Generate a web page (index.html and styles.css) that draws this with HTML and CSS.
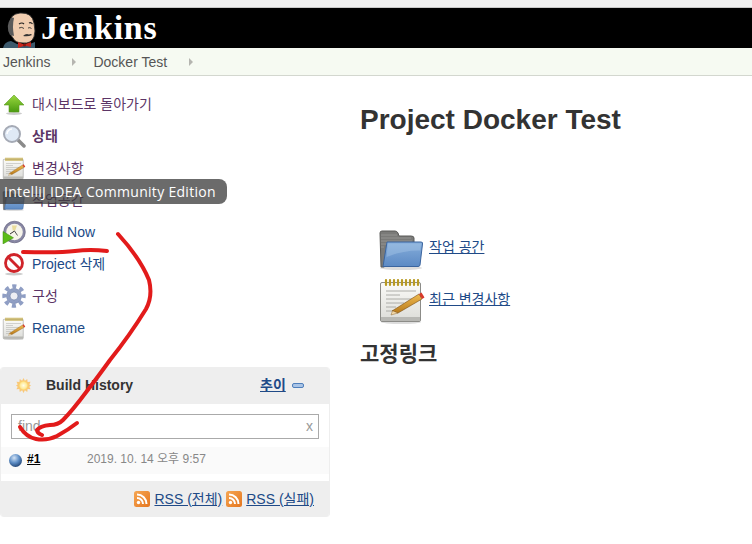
FILE: index.html
```html
<!DOCTYPE html>
<html lang="ko">
<head>
<meta charset="utf-8">
<title>Project Docker Test</title>
<link rel="stylesheet" href="styles.css">
</head>
<body>
<svg class="defs" width="0" height="0" aria-hidden="true">
  <defs>
    <linearGradient id="paper" x1="0" y1="0" x2="0" y2="1"><stop offset="0" stop-color="#fbfbf8"/><stop offset="1" stop-color="#dcdcd8"/></linearGradient>
    <linearGradient id="green" x1="0" y1="0" x2="0" y2="1"><stop offset="0" stop-color="#9ad83f"/><stop offset="1" stop-color="#4a9a10"/></linearGradient>
    <linearGradient id="blue" x1="0" y1="0" x2="0" y2="1"><stop offset="0" stop-color="#86aedb"/><stop offset="1" stop-color="#5c8ac4"/></linearGradient>
    <linearGradient id="pencil" x1="0" y1="1" x2="0" y2="0"><stop offset="0" stop-color="#b87a1c"/><stop offset="1" stop-color="#f0bb50"/></linearGradient>
    <linearGradient id="rss" x1="0" y1="0" x2="1" y2="1"><stop offset="0" stop-color="#f5a653"/><stop offset="1" stop-color="#e5761f"/></linearGradient>
    <radialGradient id="ball" cx=".4" cy=".3" r=".75"><stop offset="0" stop-color="#d3e3f5"/><stop offset=".5" stop-color="#5f8fc7"/><stop offset="1" stop-color="#1c3f70"/></radialGradient>
    <radialGradient id="sun" cx=".5" cy=".5" r=".5"><stop offset="0" stop-color="#fffde6"/><stop offset=".7" stop-color="#ffeb9c"/><stop offset="1" stop-color="#fbd468"/></radialGradient>
    <symbol id="i-notepad" viewBox="0 0 48 48">
      <ellipse cx="23" cy="46" rx="20" ry="2" fill="#ddd"/>
      <rect x="2.500" y="6.500" width="40" height="39" rx="1.500" fill="url(#paper)" stroke="#8c8c88"/>
      <rect x="3" y="41" width="39" height="4" fill="#b8b8b4"/>
      <path d="M8 4v5M12 4v5M16 4v5M20 4v5M24 4v5M28 4v5M32 4v5M36 4v5M40 4v5" stroke="#b89a20" stroke-width="2.200" stroke-linecap="round"/>
      <path d="M8 15h30M8 19h14M8 23h26M8 27h18M8 31h10M8 35h8" stroke="#a5a5a0" stroke-width=".9"/>
      <path d="M14 35 41 18l3 5-24 14z" fill="url(#pencil)" stroke="#7a4d10" stroke-width=".6"/>
      <path d="M41 18l3 5 2.500-1.500-3-5z" fill="#d83a2a"/>
      <path d="M14.500 34.700 20 37l-7 2z" fill="#f2d8a8" stroke="#7a4d10" stroke-width=".4"/>
    </symbol>
    <symbol id="i-folder" viewBox="0 0 48 48">
      <ellipse cx="23" cy="44" rx="21" ry="2" fill="#ddd"/>
      <path d="M2 9q0-2 2-2h13q2 0 3 2l1 3h12q3 0 3 2v6L6 43H3z" fill="#7a7a78" stroke="#5a5a58"/>
      <path d="M3 11h16M3 14h30M3 17h31M3 20h12M3 23h3" stroke="#939391"/>
      <path d="M9 18h34q2 0 1.500 2L42 41q-.2 1.500-2 1.500H5z" fill="url(#blue)" stroke="#3b659f"/>
      <path d="M10 19.500h33l-.7 7Q26 26 8.500 33z" fill="#a7c5e6" opacity=".45"/>
    </symbol>
    <symbol id="i-clock" viewBox="0 0 24 24">
      <circle cx="12.500" cy="12" r="10.800" fill="#8887a4" stroke="#5f5e78" stroke-width=".6"/>
      <circle cx="12.500" cy="12" r="8.300" fill="#f6f4ea"/>
      <path d="M10 5.500h5l-1.800 5-2.500 0z" fill="#eadc9c"/>
      <path d="M12.500 11l3 4.500" stroke="#555" stroke-width="1"/>
      <path d="M12.500 11 8 14" stroke="#333" stroke-width="1"/>
      <path d="M1 11.500v12.500l10.500-6.200z" fill="#5cbc18" stroke="#3f8a10" stroke-width=".5"/>
    </symbol>
    <symbol id="i-gear" viewBox="0 0 24 24">
      <circle cx="12" cy="12" r="9.600" fill="none" stroke="#8f9ec4" stroke-width="4.200" stroke-dasharray="4 3.540" stroke-dashoffset="2"/>
      <circle cx="12" cy="12" r="7.500" fill="#919fc4" stroke="#7686ad" stroke-width=".6"/>
      <circle cx="12" cy="12" r="4" fill="#eeeef4" stroke="#6a7ca5" stroke-width=".6"/>
    </symbol>
    <symbol id="i-rss" viewBox="0 0 16 16">
      <rect width="16" height="16" rx="2.500" fill="url(#rss)"/>
      <circle cx="4.500" cy="11.500" r="1.700" fill="#fff"/>
      <path d="M3 7a6 6 0 0 1 6 6M3 3.500A9.500 9.500 0 0 1 12.500 13" fill="none" stroke="#fff" stroke-width="2"/>
    </symbol>
  </defs>
</svg>

<div class="top-strip"></div>
<header class="header">
  <svg class="logo" width="36" height="40" viewBox="0 0 36 40" aria-hidden="true">
    <path d="M0 40q1-6 8-7l6 3 10 1 8-3v6z" fill="#3c5a6c"/>
    <path d="M7 17Q6 6 17 5q12-1 14 10 2 9 0 14-3 7-11 6-8 0-10-5-4-4-3-13z" fill="#f0cdb0" stroke="#2a2a2a" stroke-width=".9"/>
    <path d="M7 27Q2 18 8 10q2-1 3 0-2 8 0 18z" fill="#5a5a5a"/>
    <path d="M16 16q3-2 5 0M26 15q2-1 3.500 1" fill="none" stroke="#222" stroke-width="1.200"/>
    <path d="M16 20q3-1.500 5 .5M25 20q2-1 3.500.5" fill="none" stroke="#333" stroke-width=".9"/>
    <path d="M20 28q3-3 6-1.500 2-1 3 .5-4 2-9 1z" fill="#333"/>
    <path d="M15 34l6 2.500 7-2.500v5l-6-1.500L15 40z" fill="#c8261d"/>
    <circle cx="21.500" cy="37" r="1.500" fill="#8f120c"/>
  </svg>
  <span class="brand">Jenkins</span>
</header>
<nav class="crumbs">
  <a class="crumb" href="#">Jenkins</a><span class="crumb-arrow"></span>
  <a class="crumb" href="#">Docker Test</a><span class="crumb-arrow"></span>
</nav>

<div class="page">
  <aside class="side">
    <ul class="tasks">
      <li class="task"><svg class="icon" viewBox="0 0 24 24"><ellipse cx="12" cy="21.500" rx="8" ry="1.500" fill="#ccc"/><path d="M12 3 22 13h-5v7H7v-7H2z" fill="url(#green)" stroke="#5d9c1e" stroke-width=".6"/></svg><a class="visited" href="#">대시보드로 돌아가기</a></li>
      <li class="task"><svg class="icon" viewBox="0 0 24 24"><path d="M15 15l7 7" stroke="#8a8a8a" stroke-width="3.500" stroke-linecap="round"/><circle cx="10" cy="10" r="8" fill="#dfe9f5" stroke="#a5aab5" stroke-width="2"/><path d="M5 10a5 5 0 0 1 5-5" fill="none" stroke="#fff" stroke-width="1.500"/></svg><a class="visited strong" href="#">상태</a></li>
      <li class="task"><svg class="icon"><use href="#i-notepad"/></svg><a class="visited" href="#">변경사항</a></li>
      <li class="task"><svg class="icon"><use href="#i-folder"/></svg><a class="visited" href="#">작업공간</a></li>
      <li class="task"><svg class="icon"><use href="#i-clock"/></svg><a href="#">Build Now</a></li>
      <li class="task"><svg class="icon" viewBox="0 0 24 24"><ellipse cx="12" cy="22" rx="9" ry="1.500" fill="#ccc"/><circle cx="12" cy="11" r="8.500" fill="#fff" stroke="#d0242a" stroke-width="2.800"/><path d="M6 5l12 12" stroke="#d0242a" stroke-width="2.800"/></svg><a href="#">Project 삭제</a></li>
      <li class="task"><svg class="icon"><use href="#i-gear"/></svg><a class="visited" href="#">구성</a></li>
      <li class="task"><svg class="icon"><use href="#i-notepad"/></svg><a href="#">Rename</a></li>
    </ul>

    <section class="history">
      <div class="history-head">
        <svg class="sun" viewBox="0 0 16 16"><path d="M8 0l1.500 3L12 1l.4 3.200L15.500 4l-1.300 3L16 8l-1.800 1.300 1.300 2.700-3.100-.2L12 15l-2.500-2L8 16l-1.500-3L4 15l-.4-3.200-3.100.2 1.300-2.700L0 8l1.800-1L.5 4l3.100.2L4 1l2.500 2z" fill="#f9c878"/><circle cx="8" cy="8" r="4.800" fill="url(#sun)"/></svg>
        <span class="history-title">Build History</span>
        <a class="trend" href="#">추이</a>
        <span class="collapse"></span>
      </div>
      <div class="search-wrap">
        <div class="search"><span class="search-text">find</span><span class="search-x">x</span></div>
      </div>
      <div class="build">
        <svg class="ball" viewBox="0 0 12 12"><circle cx="6" cy="6" r="6" fill="url(#ball)"/></svg>
        <a class="build-no" href="#">#1</a>
        <span class="build-date">2019. 10. 14 오후 9:57</span>
      </div>
      <div class="history-foot">
        <svg class="rss"><use href="#i-rss"/></svg><a href="#">RSS (전체)</a>
        <svg class="rss"><use href="#i-rss"/></svg><a href="#">RSS (실패)</a>
      </div>
    </section>
  </aside>

  <main class="main">
    <h1 class="title">Project Docker Test</h1>
    <div class="main-links">
      <div class="main-link"><svg class="big-icon"><use href="#i-folder"/></svg><a href="#">작업 공간</a></div>
      <div class="main-link"><svg class="big-icon"><use href="#i-notepad"/></svg><a href="#">최근 변경사항</a></div>
    </div>
    <h2 class="perma">고정링크</h2>
  </main>
</div>

<div class="tooltip">IntelliJ IDEA Community Edition</div>

<svg class="scribble" width="752" height="544" viewBox="0 0 752 544" aria-hidden="true">
  <path d="M23 252Q60 253 75 251T107 251" />
  <path d="M118 234Q140 258 149 280 153 296 146 309 130 335 110 360 97 378 87 391 72 411 63 420 58 425 50 425 40 426 37 430 37 433 42 435" />
  <path d="M20 427Q26 437 36 439 47 441 57 436 68 430 77 423" />
</svg>
</body>
</html>
```
FILE: styles.css
```css
* { box-sizing: border-box; }
html, body { margin: 0; padding: 0; }
body {
  position: relative;
  width: 752px;
  height: 544px;
  overflow: hidden;
  background: #fff;
  color: #333;
  font: 14px/1.2 "Liberation Sans", "Noto Sans CJK KR", sans-serif;
}
a { color: #204a87; }
.defs { position: absolute; }

.top-strip { height: 8px; background: #f0f0f0; border-bottom: 1px solid #c8c8c8; }
.header { height: 40px; background: #000; display: flex; align-items: flex-end; padding-left: 3px; overflow: hidden; }
.logo { display: block; flex: none; }
.brand {
  align-self: center;
  margin-left: 2px;
  color: #fff;
  font: bold 34px/1 "Liberation Serif", serif;
  letter-spacing: .7px;
}
.crumbs {
  height: 28px;
  background: #f6faf2;
  border-bottom: 1px solid #d3d7cf;
  display: flex;
  align-items: center;
  padding: 1px 0 0 3px;
}
.crumb { color: #555; text-decoration: none; }
.crumb-arrow {
  width: 0; height: 0;
  margin: 0 17px 0 22px;
  border-left: 4px solid #b5b5b0;
  border-top: 4px solid transparent;
  border-bottom: 4px solid transparent;
}

.page { display: flex; }
.side { width: 330px; flex: none; padding-top: 12px; }
.tasks { list-style: none; margin: 0; padding: 0; }
.task { height: 32px; display: flex; align-items: center; padding-left: 2px; gap: 6px; }
.task a { text-decoration: none; }
.task a.visited { color: #5c3566; }
.task a.strong { font-weight: bold; }
.icon { width: 24px; height: 24px; flex: none; }

.history { margin-top: 23px; border: 1px solid #eee; border-width: 0 1px; border-radius: 4px; overflow: hidden; background: #fff; }
.history-head { height: 37px; background: #eee; display: flex; align-items: center; padding-left: 15px; }
.sun { width: 15px; height: 15px; flex: none; }
.history-title { margin-left: 15px; font-weight: bold; color: #333; width: 214px; }
.trend { font-weight: bold; }
.collapse { width: 12px; height: 5px; margin-left: 6px; background: #a9c4e6; border: 1px solid #4f7fbb; border-radius: 2px; }
.search-wrap { padding: 10px 10px 8px; }
.search {
  height: 25px;
  border: 1px solid #aaa;
  display: flex;
  justify-content: space-between;
  align-items: center;
  padding: 0 5px 0 6px;
  color: #999;
}
.build { height: 27px; background: #fafafa; display: flex; align-items: center; padding: 0 0 2px 8px; margin-bottom: 7px; }
.ball { width: 13px; height: 13px; flex: none; margin-top: 2px; }
.build-no { margin-left: 5px; width: 60px; font-size: 12px; font-weight: bold; color: #000; }
.build-date { font-size: 12px; color: #888; }
.history-foot { height: 36px; background: #eee; display: flex; align-items: center; justify-content: flex-end; padding: 0 15px 0 0; gap: 4px; }
.rss { width: 16px; height: 16px; flex: none; }

.main { flex: 1; padding: 28px 0 0 30px; }
.title { margin: 0; font-size: 28px; line-height: 32px; font-weight: bold; color: #333; }
.main-links { margin-top: 86px; padding-left: 18px; }
.main-link { height: 52px; display: flex; align-items: center; gap: 3px; }
.main-link a { margin-bottom: 2px; }
.big-icon { width: 48px; height: 48px; flex: none; }
.perma { margin: 14px 0 0; font-size: 21px; line-height: 28px; font-weight: bold; color: #333; }

.tooltip {
  position: absolute;
  left: 0;
  top: 179px;
  width: 227px;
  height: 25px;
  padding-left: 4px;
  background: rgba(60, 60, 60, .76);
  border-radius: 0 8px 8px 0;
  color: #fff;
  font: 14px/25px "Open Sans", "DejaVu Sans", sans-serif;
  letter-spacing: .3px;
  white-space: nowrap;
}
.scribble { position: absolute; left: 0; top: 0; pointer-events: none; }
.scribble path { fill: none; stroke: #e21b1b; stroke-width: 4; stroke-linecap: round; stroke-linejoin: round; }
```
